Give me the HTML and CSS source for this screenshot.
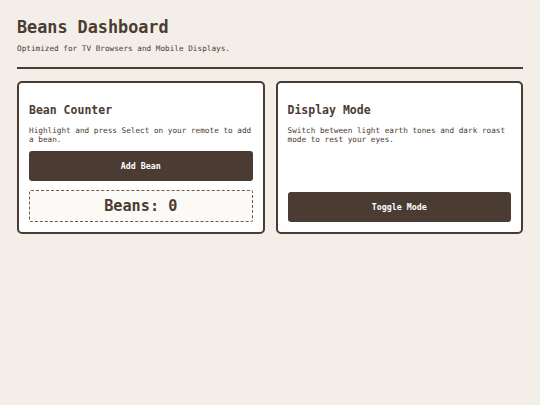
FILE: index.html
```html
<!DOCTYPE html>
<html>
<head>
<meta charset="utf-8">
<link rel="stylesheet" href="styles.css">
</head>
<body>
<header class="header">
  <h1 class="title">Beans Dashboard</h1>
  <p class="subtitle">Optimized for TV Browsers and Mobile Displays.</p>
</header>
<main class="grid">
  <section class="card">
    <h2 class="card-title">Bean Counter</h2>
    <p class="card-text">Highlight and press Select on your remote to add a bean.</p>
    <button class="btn">Add Bean</button>
    <div class="counter">Beans: 0</div>
  </section>
  <section class="card">
    <h2 class="card-title">Display Mode</h2>
    <p class="card-text">Switch between light earth tones and dark roast mode to rest your eyes.</p>
    <button class="btn btn-bottom">Toggle Mode</button>
  </section>
</main>
</body>
</html>
```
FILE: styles.css
```css
html, body {
  margin: 0;
  background: #f4eee8;
}
body {
  padding: 17px;
  font-family: "DejaVu Sans Mono", monospace;
  color: #4a3c32;
}
.header {
  border-bottom: 2px solid #4a3c32;
  padding-bottom: 13px;
}
.title {
  margin: 0;
  font-size: 16.8px;
  line-height: 20px;
  font-weight: bold;
}
.subtitle {
  margin: 7px 0 0;
  font-size: 7.7px;
  line-height: 10px;
}
.grid {
  display: grid;
  grid-template-columns: 1fr 1fr;
  gap: 11px;
  margin-top: 12px;
}
.card {
  background: #fff;
  border: 2px solid #4a3c32;
  border-radius: 5px;
  padding: 10px;
  display: flex;
  flex-direction: column;
}
.card-title {
  margin: 10px 0 9px;
  font-size: 11.5px;
  line-height: 14px;
  font-weight: bold;
}
.card-text {
  margin: 0;
  font-size: 7.7px;
  line-height: 9px;
}
.btn {
  margin-top: 7px;
  height: 30px;
  border: none;
  border-radius: 3px;
  background: #4a3c33;
  color: #fff;
  font-family: "DejaVu Sans Mono", monospace;
  font-weight: bold;
  font-size: 8.3px;
  padding: 0;
}
.btn-bottom {
  margin-top: auto;
}
.counter {
  margin-top: 9px;
  height: 30px;
  border: 1px dashed #6b5d52;
  border-radius: 2px;
  background: #fcfaf6;
  display: flex;
  align-items: center;
  justify-content: center;
  font-size: 15.2px;
  font-weight: bold;
}
```
